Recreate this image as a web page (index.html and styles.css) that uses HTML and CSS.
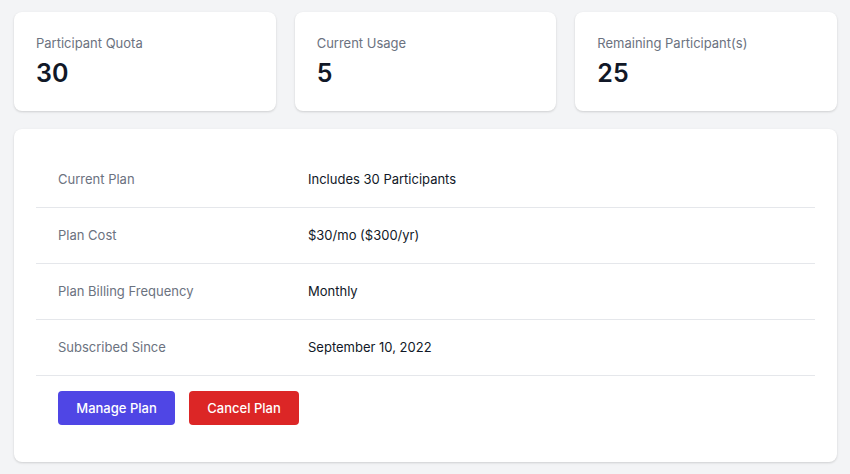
FILE: index.html
```html
<!DOCTYPE html>
<html>
<head>
<meta charset="utf-8">
<link rel="stylesheet" href="styles.css">
</head>
<body>
<div class="page">
  <div class="stats">
    <div class="stat-card">
      <div class="stat-label">Participant Quota</div>
      <div class="stat-value">30</div>
    </div>
    <div class="stat-card">
      <div class="stat-label">Current Usage</div>
      <div class="stat-value">5</div>
    </div>
    <div class="stat-card">
      <div class="stat-label">Remaining Participant(s)</div>
      <div class="stat-value">25</div>
    </div>
  </div>
  <div class="plan-card">
    <dl class="plan-list">
      <div class="plan-row">
        <dt class="plan-key">Current Plan</dt>
        <dd class="plan-val">Includes 30 Participants</dd>
      </div>
      <div class="plan-row">
        <dt class="plan-key">Plan Cost</dt>
        <dd class="plan-val">$30/mo ($300/yr)</dd>
      </div>
      <div class="plan-row">
        <dt class="plan-key">Plan Billing Frequency</dt>
        <dd class="plan-val">Monthly</dd>
      </div>
      <div class="plan-row">
        <dt class="plan-key">Subscribed Since</dt>
        <dd class="plan-val">September 10, 2022</dd>
      </div>
    </dl>
    <div class="actions">
      <button class="btn btn-primary">Manage Plan</button>
      <button class="btn btn-danger">Cancel Plan</button>
    </div>
  </div>
</div>
</body>
</html>
```
FILE: styles.css
```css
* { box-sizing: border-box; }
html, body { margin: 0; padding: 0; }
body {
  background: #f3f4f6;
  font-family: Inter, "Liberation Sans", sans-serif;
  color: #111827;
  width: 850px;
  height: 474px;
  overflow: hidden;
}
.page {
  padding: 12px 13px 12px 14px;
  display: flex;
  flex-direction: column;
  gap: 18px;
}
.stats {
  display: grid;
  grid-template-columns: repeat(3, 1fr);
  gap: 19px;
}
.stat-card {
  background: #fff;
  border-radius: 8px;
  box-shadow: 0 1px 3px rgba(0,0,0,0.1), 0 1px 2px rgba(0,0,0,0.06);
  height: 99px;
  padding: 22px 22px 0;
}
.stat-label {
  font-size: 13px;
  line-height: 18px;
  color: #6b7280;
}
.stat-value {
  margin-top: 5px;
  font-size: 25px;
  line-height: 32px;
  font-weight: 600;
  color: #111827;
}
.plan-card {
  background: #fff;
  border-radius: 8px;
  box-shadow: 0 1px 3px rgba(0,0,0,0.1), 0 1px 2px rgba(0,0,0,0.06);
  height: 333px;
  padding: 23px 22px 0;
}
.plan-list { margin: 0; }
.plan-row {
  display: grid;
  grid-template-columns: 234px 1fr;
  column-gap: 16px;
  height: 56px;
  align-items: center;
  padding: 0 22px 2px;
  border-bottom: 1px solid #e5e7eb;
}
.plan-key {
  font-size: 13px;
  color: #6b7280;
}
.plan-val {
  margin: 0;
  font-size: 13px;
  color: #111827;
}
.actions {
  display: flex;
  gap: 14px;
  padding: 15px 22px 0;
}
.btn {
  border: none;
  border-radius: 4px;
  height: 34px;
  font-family: inherit;
  font-size: 13px;
  font-weight: 500;
  color: #fff;
  padding: 0;
  white-space: nowrap;
}
.btn-primary { background: #4f46e5; width: 117px; }
.btn-danger { background: #dc2626; width: 110px; }
```
